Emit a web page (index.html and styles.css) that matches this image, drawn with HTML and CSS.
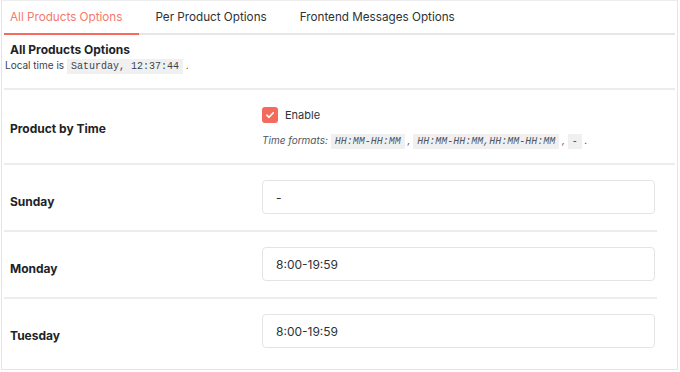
FILE: index.html
```html
<!DOCTYPE html>
<html lang="en">
<head>
  <meta charset="UTF-8" />
  <title>Product by Time - Settings</title>
  <meta name="viewport" content="width=device-width, initial-scale=1.0" />
  <link rel="stylesheet" href="styles.css">
</head>
<body>
  <div class="panel">
    <nav class="tabs">
      <a class="tab active" href="#">All Products Options</a>
      <a class="tab" href="#">Per Product Options</a>
      <a class="tab" href="#">Frontend Messages Options</a>
    </nav>

    <div class="section-head">
      <h2>All Products Options</h2>
      <p>Local time is <code>Saturday, 12:37:44</code> .</p>
    </div>

    <div class="row row-main">
      <div class="label">Product by Time</div>
      <div class="field">
        <label class="check">
          <span class="box">
            <svg width="10" height="10" viewBox="0 0 10 10"><path d="M1.8 5.2 L4 7.3 L8.3 2.8" fill="none" stroke="#fff" stroke-width="1.6" stroke-linecap="round" stroke-linejoin="round"/></svg>
          </span>
          Enable
        </label>
        <p class="hint">Time formats: <code>HH:MM-HH:MM</code> , <code>HH:MM-HH:MM,HH:MM-HH:MM</code> , <code>-</code> .</p>
      </div>
    </div>

    <div class="days">
      <div class="row">
        <div class="label">Sunday</div>
        <div class="field"><input type="text" value="-" /></div>
      </div>
      <div class="row">
        <div class="label">Monday</div>
        <div class="field"><input type="text" value="8:00-19:59" /></div>
      </div>
      <div class="row">
        <div class="label">Tuesday</div>
        <div class="field"><input type="text" value="8:00-19:59" /></div>
      </div>
    </div>
  </div>
</body>
</html>
```

FILE: styles.css
```css
:root {
  --accent: #f26b5c;
  --line: #ececec;
  --text: #1d2327;
}
body {
  margin: 0;
  background: #fff;
  color: var(--text);
  font-family: Inter, "Noto Sans", sans-serif;
}
.panel {
  box-sizing: border-box;
  width: 677px;
  height: 370px;
  margin-left: 1px;
  padding: 0 2px;
  border: 1px solid #e4e4e4;
  border-top: 1px solid #ededed;
  overflow: hidden;
}
.tabs {
  display: flex;
  height: 32px;
  border-bottom: 2px solid #e6e6e6;
}
.tab {
  display: flex;
  align-items: center;
  padding: 0 16.5px;
  margin-bottom: -2px;
  border-bottom: 2px solid transparent;
  color: #2c3338;
  font-size: 11.7px;
  text-decoration: none;
}
.tab:first-child {
  padding-left: 6px;
}
.tab.active {
  color: #f37a6c;
  border-bottom-color: var(--accent);
}
.section-head {
  padding: 8px 0 13px;
  border-bottom: 2px solid var(--line);
}
.section-head h2 {
  margin: 0 0 0 6px;
  font-size: 12px;
  font-weight: 700;
  line-height: 14px;
}
.section-head p {
  margin: 0 0 0 1px;
  font-size: 10px;
  line-height: 16px;
  color: #3c434a;
}
code {
  font-family: "Liberation Mono", "DejaVu Sans Mono", monospace;
  font-size: 10px;
  background: #f0f0f1;
  color: #3c434a;
  padding: 2px 4px;
}
.row {
  display: grid;
  grid-template-columns: 252px 1fr;
  align-items: center;
  padding: 16px 2px 16px 6px;
  border-bottom: 2px solid var(--line);
}
.row-main {
  padding: 16px 2px 13px 6px;
}
.days .row {
  padding: 15px 2px 16px 6px;
}
.days .label {
  padding-top: 8px;
}
.label {
  font-size: 12px;
  font-weight: 700;
}
.check {
  display: flex;
  align-items: center;
  gap: 7px;
  height: 18px;
  font-size: 11px;
  color: #2c3338;
}
.box {
  display: flex;
  align-items: center;
  justify-content: center;
  width: 16px;
  height: 16px;
  border-radius: 3px;
  background: var(--accent);
}
.hint {
  margin: 8px 0 0;
  font-size: 10px;
  font-style: italic;
  line-height: 16px;
  color: #50575e;
}
.hint code {
  font-style: italic;
  color: #50575e;
  padding: 2px 4px;
}
.days {
  margin-right: 18px;
}
.days .row:last-child {
  border-bottom: 0;
}
input[type="text"] {
  box-sizing: border-box;
  width: 100%;
  height: 34px;
  padding: 0 13px;
  border: 1px solid #e2e4e7;
  border-radius: 4px;
  font-family: Inter, "Noto Sans", sans-serif;
  font-size: 12px;
  color: #2c3338;
  background: #fff;
}
```
